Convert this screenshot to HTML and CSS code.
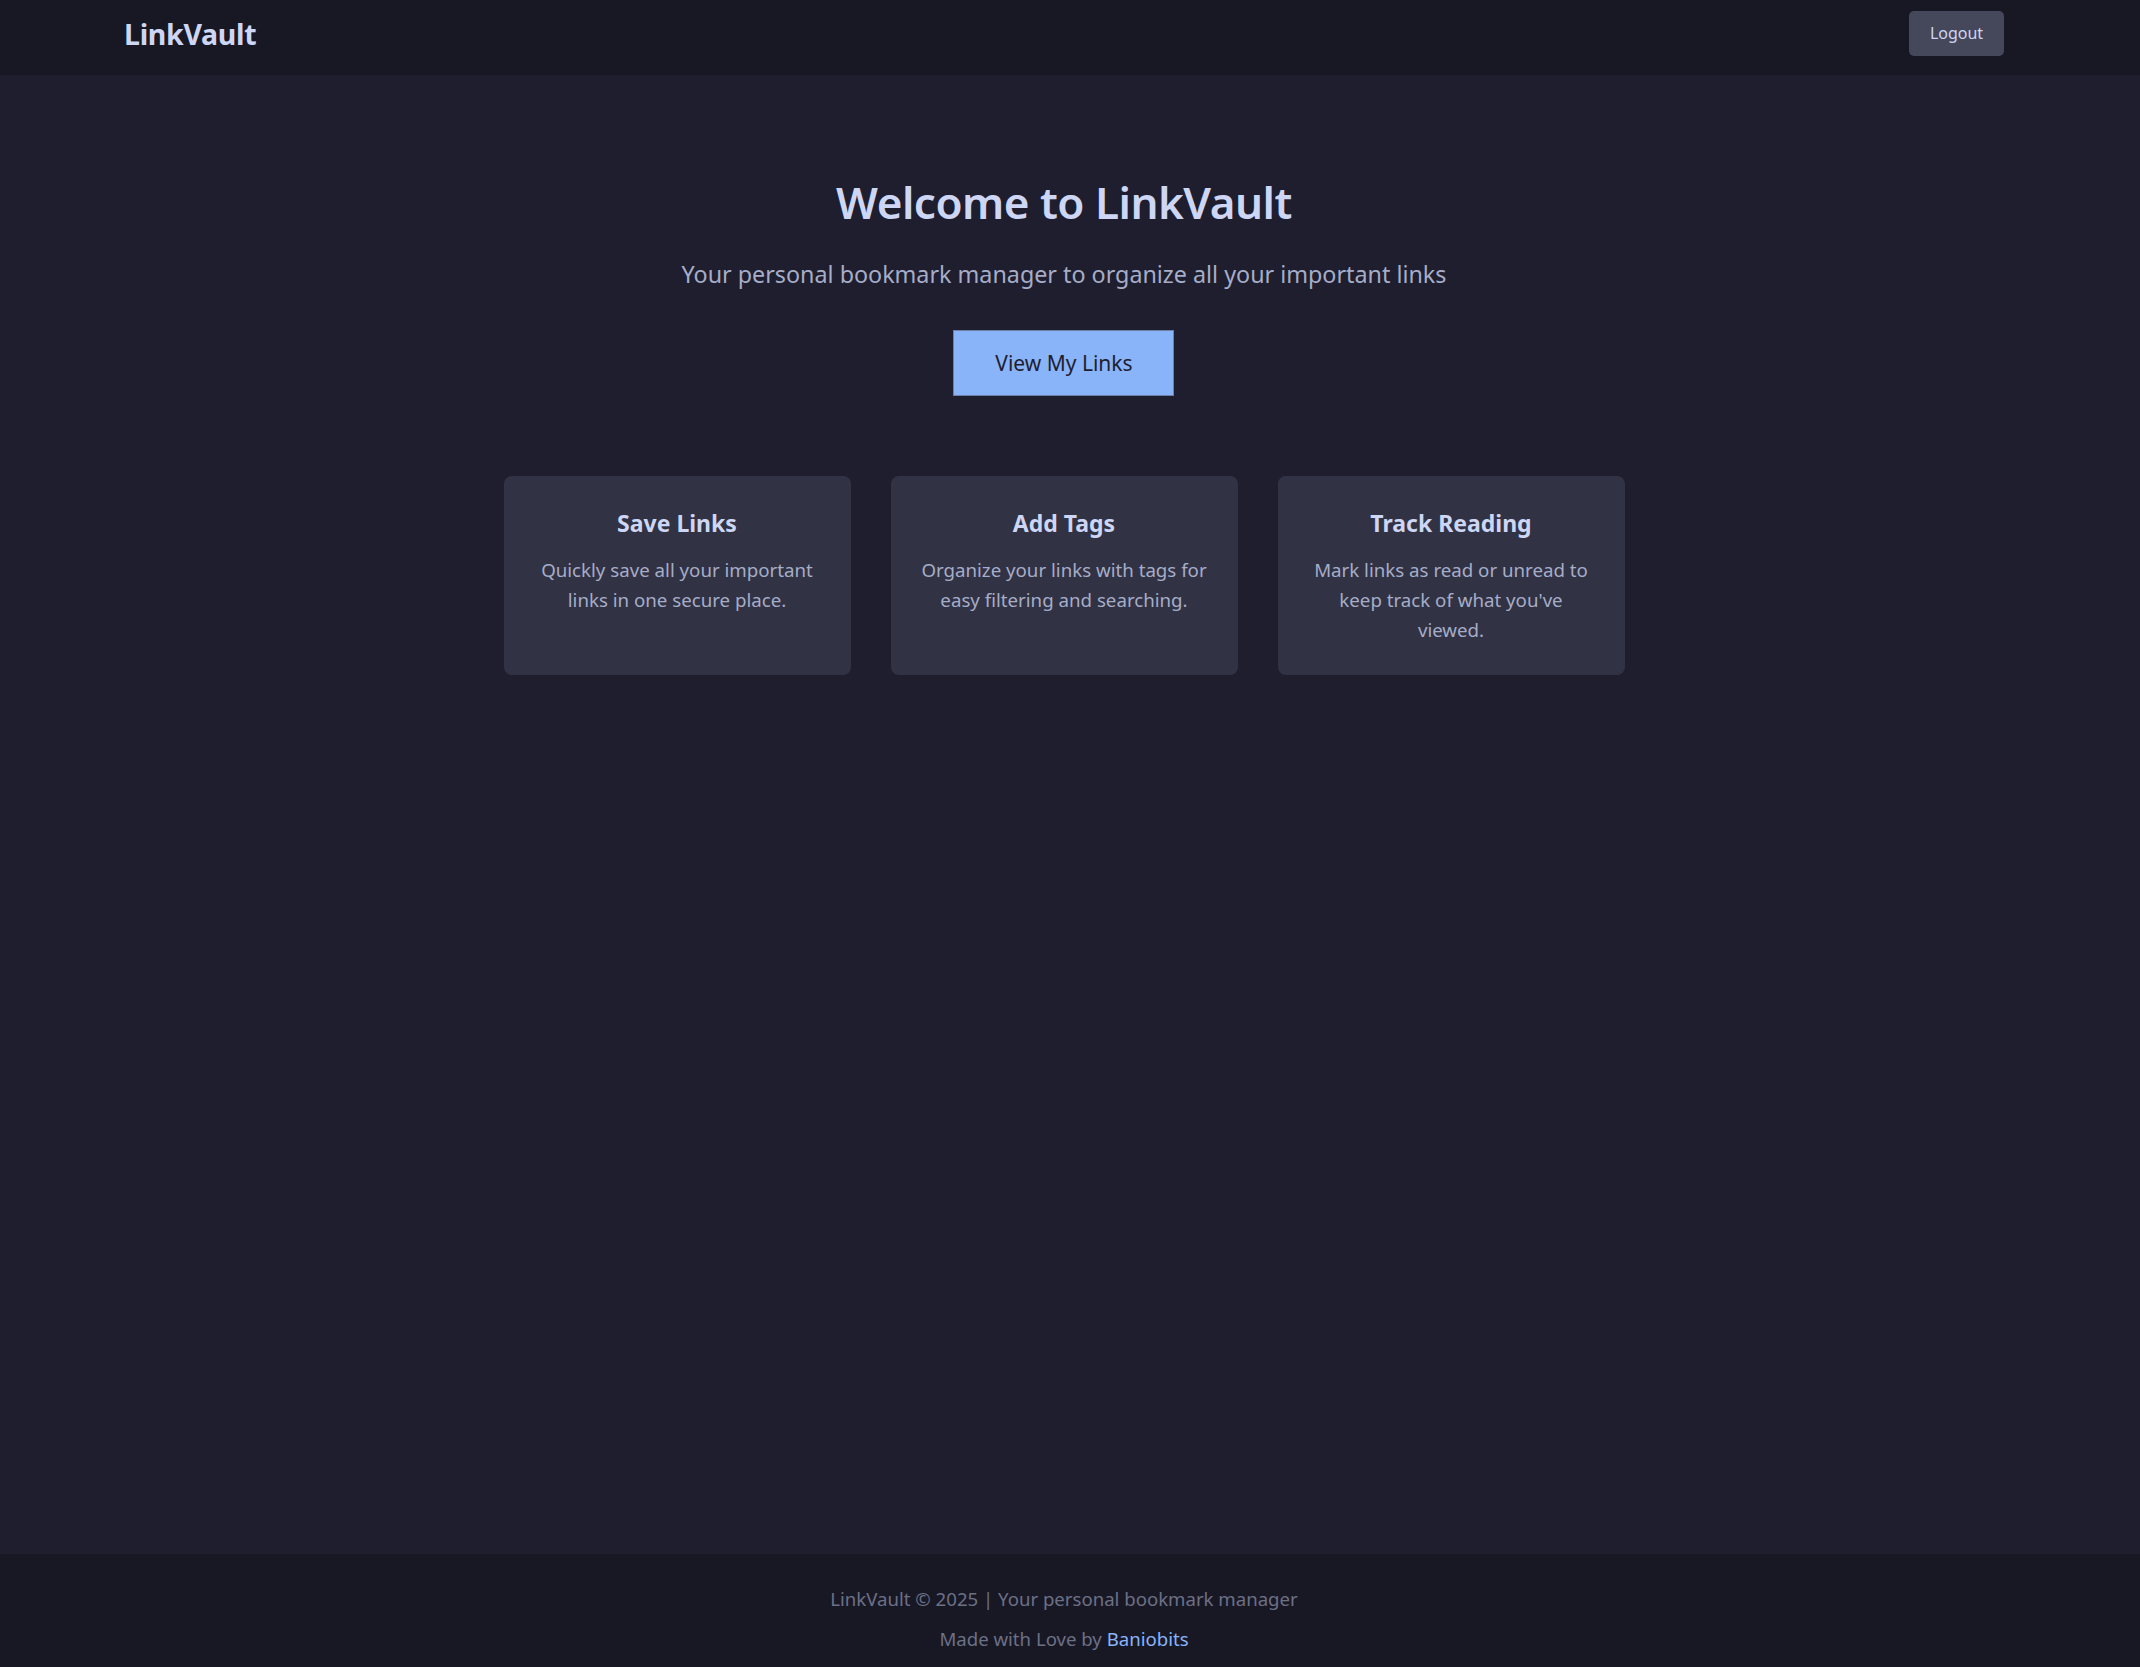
FILE: index.html
```html
<!DOCTYPE html>
<html lang="en">
<head>
<meta charset="utf-8">
<title>LinkVault</title>
<link rel="stylesheet" href="styles.css">
</head>
<body>
<header class="site-header">
  <a class="logo" href="#">LinkVault</a>
  <button class="logout-btn" type="button">Logout</button>
</header>
<main class="main">
  <section class="hero">
    <h1 class="hero-title">Welcome to LinkVault</h1>
    <p class="hero-subtitle">Your personal bookmark manager to organize all your important links</p>
    <a class="cta-btn" href="#">View My Links</a>
  </section>
  <section class="features">
    <div class="feature-card">
      <h3 class="feature-title">Save Links</h3>
      <p class="feature-text">Quickly save all your important links in one secure place.</p>
    </div>
    <div class="feature-card">
      <h3 class="feature-title">Add Tags</h3>
      <p class="feature-text">Organize your links with tags for easy filtering and searching.</p>
    </div>
    <div class="feature-card">
      <h3 class="feature-title">Track Reading</h3>
      <p class="feature-text">Mark links as read or unread to keep track of what you've viewed.</p>
    </div>
  </section>
</main>
<footer class="site-footer">
  <p class="footer-line">LinkVault © 2025 | Your personal bookmark manager</p>
  <p class="footer-line">Made with Love by <a class="footer-link" href="#">Baniobits</a></p>
</footer>
</body>
</html>
```

FILE: styles.css
```css
* { box-sizing: border-box; }

html, body { height: 100%; }

body {
  margin: 0;
  min-height: 100vh;
  display: flex;
  flex-direction: column;
  background: #1e1e2e;
  color: #cdd6f4;
  font-family: "Noto Sans", "Open Sans", sans-serif;
}

.site-header {
  height: 75px;
  flex: 0 0 auto;
  display: flex;
  align-items: center;
  justify-content: space-between;
  padding: 0 136px 0 124px;
  background: #181825;
}

.logo {
  margin-top: -8px;
  color: #cdd6f4;
  text-decoration: none;
  font-size: 28.5px;
  font-weight: 700;
  letter-spacing: -0.3px;
}

.logout-btn {
  width: 95px;
  height: 45px;
  margin-top: -9px;
  border: none;
  border-radius: 5px;
  background: #45475a;
  color: #cdd6f4;
  font-family: inherit;
  font-size: 16px;
  cursor: pointer;
}

.main {
  flex: 1 0 auto;
  display: flex;
  flex-direction: column;
  align-items: center;
  padding-right: 12px;
}

.hero {
  display: flex;
  flex-direction: column;
  align-items: center;
  text-align: center;
  padding-top: 99px;
}

.hero-title {
  margin: 0;
  font-size: 44px;
  line-height: 56px;
  font-weight: 600;
  color: #cdd6f4;
  letter-spacing: -0.5px;
}

.hero-subtitle {
  margin: 28px 0 0;
  font-size: 23.3px;
  line-height: 32px;
  color: #a6adc8;
}

.cta-btn {
  margin-top: 40px;
  width: 221px;
  height: 66px;
  display: flex;
  align-items: center;
  justify-content: center;
  background: #89b4fa;
  border: 1px solid #6b7fa8;
  color: #1e1e2e;
  font-size: 21px;
  text-decoration: none;
}

.features {
  margin-top: 80px;
  display: grid;
  grid-template-columns: repeat(3, 347px);
  gap: 40px;
}

.feature-card {
  background: #313244;
  border-radius: 8px;
  padding: 33px 30px 30px;
  text-align: center;
}

.feature-title {
  margin: 0 0 17px;
  font-size: 23px;
  line-height: 29px;
  font-weight: 700;
  color: #cdd6f4;
}

.feature-text {
  margin: 0;
  font-size: 18.7px;
  line-height: 30px;
  color: #a6adc8;
}

.site-footer {
  flex: 0 0 auto;
  height: 113px;
  background: #181825;
  text-align: center;
  padding: 25px 12px 0 0;
}

.footer-line {
  margin: 0;
  font-size: 18.6px;
  line-height: 40px;
  color: #6c7086;
}

.footer-link {
  color: #89b4fa;
  text-decoration: none;
}
```
